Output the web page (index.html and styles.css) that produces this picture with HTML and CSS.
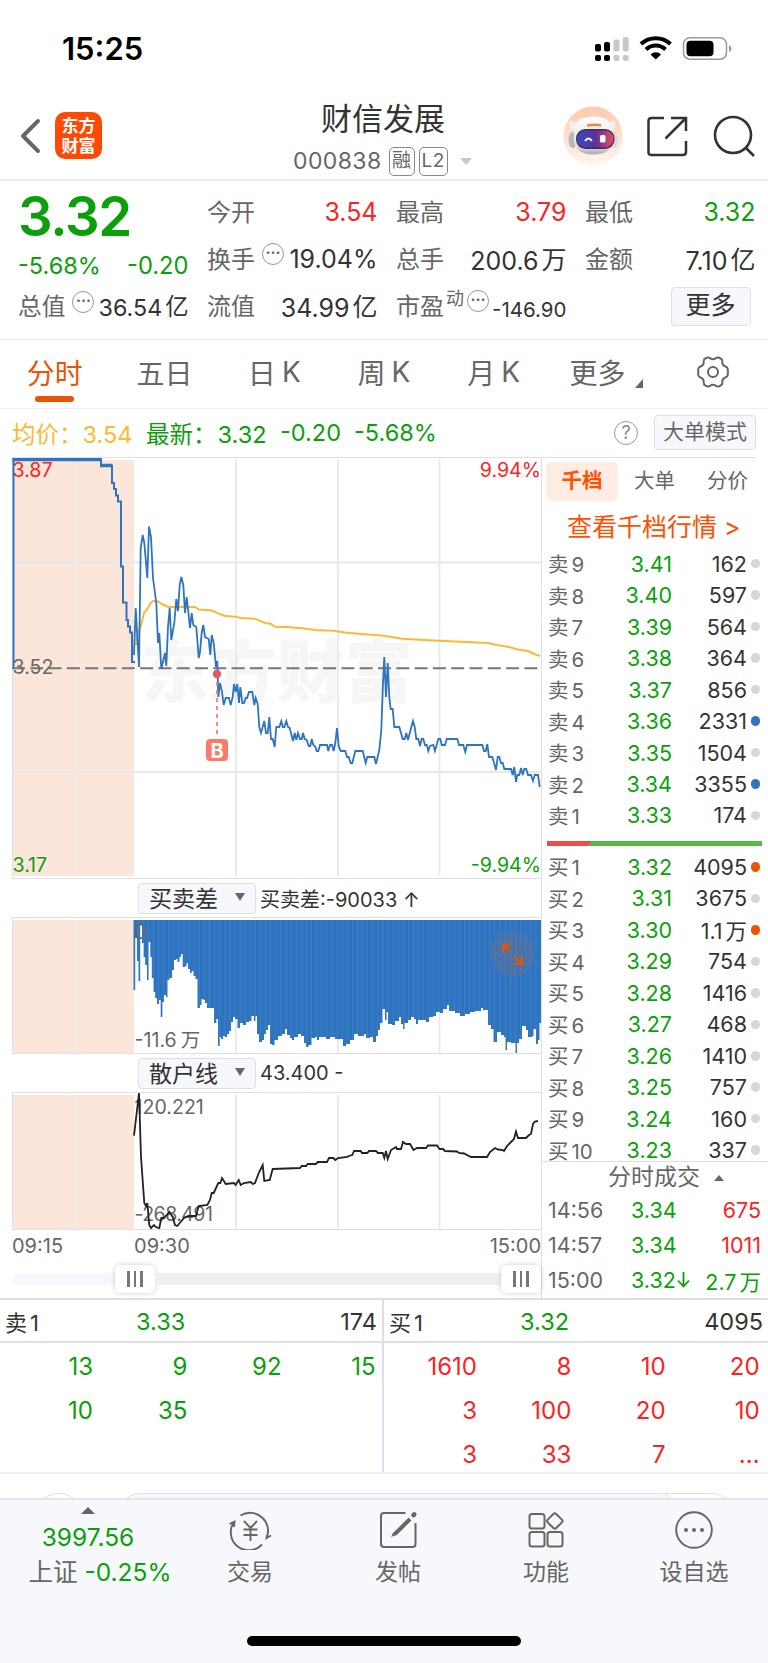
FILE: index.html
```html
<!DOCTYPE html>
<html lang="zh-CN">
<head>
  <meta charset="UTF-8">
  <title>财信发展 000838</title>
  <link rel="stylesheet" href="styles.css">
</head>
<body>

  <!-- Barra de estado -->
  <div class="status">
    <span class="clock">15:25</span>
    <svg class="status-icons" width="140" height="26" viewBox="0 0 140 26">
      <g fill="#000"><rect x="0" y="8" width="6" height="7.500" rx="2"/><rect x="9" y="6" width="6" height="9.500" rx="2"/><rect x="0" y="19" width="6" height="6" rx="2"/><rect x="9" y="19" width="6" height="6" rx="2"/></g>
      <g fill="#c8c8c8"><rect x="18.500" y="3.500" width="6" height="12" rx="2"/><rect x="27.700" y="1" width="6" height="14.500" rx="2"/><rect x="18.500" y="19" width="6" height="6" rx="2"/><rect x="27.700" y="19" width="6" height="6" rx="2"/></g>
      <path d="M46 8a21.500 21.500 0 0 1 29.500 0M51 13.500a14 14 0 0 1 19.500 0" fill="none" stroke="#000" stroke-width="4"/>
      <path d="M55.500 18.500a7.500 7.500 0 0 1 10.500 0l-5.200 5z"/>
      <rect x="88.500" y="1.800" width="43" height="21.500" rx="6.500" fill="none" stroke="#9b9b9b" stroke-width="1.500"/>
      <rect x="91.500" y="4.800" width="27" height="15.500" rx="4"/>
      <path d="M134 9q2.500 1 2.500 3.500t-2.500 3.500z" fill="#9b9b9b"/>
    </svg>
  </div>

  <!-- Cabecera -->
  <header class="header">
    <svg class="back" width="22" height="36" viewBox="0 0 22 36"><path d="M18 3L3 18l15 15" fill="none" stroke="#666" stroke-width="4" stroke-linecap="round" stroke-linejoin="round"/></svg>
    <div class="logo">东方<br>财富</div>
    <div class="title">
      <h1>财信发展</h1>
      <p>000838 <span class="tag">融</span><span class="tag">L2</span><i class="caret"></i></p>
    </div>
    <div class="actions">
      <svg width="60" height="60" viewBox="0 0 60 60">
        <defs>
          <linearGradient id="halo" x1="0" y1="0" x2="0" y2="1"><stop offset="0" stop-color="#ffc9ad"/><stop offset="1" stop-color="#fff6f1"/></linearGradient>
          <linearGradient id="visor"><stop offset="0" stop-color="#3a4bc0"/><stop offset=".5" stop-color="#5c2f9c"/><stop offset="1" stop-color="#f04a62"/></linearGradient>
          <linearGradient id="head" x1="0" y1="0" x2="0" y2="1"><stop offset="0" stop-color="#fff"/><stop offset=".8" stop-color="#e4dfe2"/><stop offset="1" stop-color="#a9a6b2"/></linearGradient>
        </defs>
        <circle cx="30" cy="30" r="29.500" fill="url(#halo)"/>
        <ellipse cx="10" cy="34" rx="4.500" ry="8" fill="#b9b6bd"/><ellipse cx="51" cy="34" rx="4" ry="8" fill="#dcd5d9"/>
        <path d="M7 14q-2 8 4 11l7-9q-8 1-11-2zM52 14q2 8-4 11l-7-9q8 1 11-2z" fill="#f3eff0"/>
        <path d="M11 30q0-16 9-18 10-3 20 0 9 2 10 18 2 18-19 18.500-22 0-20-18.500z" fill="url(#head)"/>
        <rect x="13" y="23" width="38.500" height="20" rx="9.500" fill="#3b3150"/>
        <rect x="14" y="24.500" width="36.500" height="17" rx="8.500" fill="url(#visor)"/>
        <path d="M24 19.500q7-1.500 14-.3" stroke="#ee8a3a" stroke-width="2.500" fill="none"/>
        <path d="M22 35q3.500-5 7 0" stroke="#fff" stroke-width="1.800" fill="none"/><rect x="37" y="29" width="5.500" height="7.500" rx="1.500" fill="#fff"/>
      </svg>
      <svg width="42" height="42" viewBox="0 0 42 42" fill="none" stroke="#333" stroke-width="2.500"><path d="M18 3H5.500Q2.500 3 2.500 6v31.500q0 2.500 3 2.500H37q3 0 3-3V26M25 3h15v13M39 4L19.500 23.500"/></svg>
      <svg width="42" height="42" viewBox="0 0 42 42" fill="none" stroke="#333" stroke-width="2.600"><circle cx="20" cy="20" r="18"/><path d="M32.500 32.500L41 41"/></svg>
    </div>
  </header>

  <!-- Cotización -->
  <section class="quote">
    <div class="col">
      <div class="price green">3.32</div>
      <div class="pair small green"><span>-5.68%</span><span>-0.20</span></div>
      <div class="pair small"><label>总值<b class="dots">···</b></label><span>36.54<u>亿</u></span></div>
    </div>
    <div class="col">
      <div class="pair"><label>今开</label><span class="red">3.54</span></div>
      <div class="pair"><label>换手<b class="dots">···</b></label><span>19.04%</span></div>
      <div class="pair"><label>流值</label><span>34.99<u>亿</u></span></div>
    </div>
    <div class="col">
      <div class="pair"><label>最高</label><span class="red">3.79</span></div>
      <div class="pair"><label>总手</label><span>200.6<u>万</u></span></div>
      <div class="pair"><label>市盈<sup>动</sup><b class="dots near">···</b></label><span class="tiny">-146.90</span></div>
    </div>
    <div class="col">
      <div class="pair"><label>最低</label><span class="green">3.32</span></div>
      <div class="pair"><label>金额</label><span>7.10<u>亿</u></span></div>
      <div class="pair end"><span class="more">更多</span></div>
    </div>
  </section>

  <nav class="tabs">
    <span class="active">分时</span><span>五日</span><span>日<em>K</em></span><span>周<em>K</em></span><span>月<em>K</em></span><span class="last">更多<i class="corner"></i></span>
    <span><svg width="34" height="34" viewBox="0 0 34 34" fill="none" stroke="#666" stroke-width="2"><path d="M10.500 2.800Q13 2 14.500 3.400 17 5.200 19.500 3.400 21 2 23.500 2.800L25.600 4.200Q26.500 5.300 26.300 7.500 26.400 10.400 29 11.300 31.600 12.200 31.800 14.200V19.800Q31.600 21.800 29 22.700 26.400 23.600 26.300 26.500 26.500 28.700 25.600 29.800L23.500 31.200Q21 32 19.500 30.600 17 28.800 14.500 30.600 13 32 10.500 31.200L8.400 29.800Q7.500 28.700 7.700 26.500 7.600 23.600 5 22.700 2.400 21.800 2.200 19.800V14.200Q2.400 12.200 5 11.300 7.600 10.400 7.700 7.500 7.500 5.300 8.400 4.200Z" stroke-linejoin="round"/><circle cx="17" cy="17" r="5"/></svg></span>
  </nav>

  <div class="latest">
    <span class="avg">均价：3.54</span>
    <span class="green now">最新：<span>3.32</span></span><span class="green now2">-0.20</span><span class="green now3">-5.68%</span>
    <span class="help">?</span>
    <span class="mode">大单模式</span>
  </div>

  <main class="market">
    <div class="charts">
      <svg width="530" height="422" viewBox="12 457 530 422">
        <rect x="12" y="460" width="122" height="416" fill="#fce6da"/>
        <text x="141" y="697" class="watermark">东方财富</text>
        <path class="grid" d="M73 459V876M236 459V876M338 459V876M439.500 459V876M12 562.500H541M12 772H541"/>
        <path d="M12.500 457V878M12 878.500H541" fill="none" stroke="#dcdfe6" stroke-width="1.200"/>
        <path d="M12 668.300H541" stroke="#777" stroke-width="2" stroke-dasharray="13 5.300"/>
        <polyline id="avgLine" fill="none" stroke="#fdb933" stroke-width="2"/>
        <polyline id="preLine" fill="none" stroke="#2f74c0" stroke-width="2"/>
        <path d="M12.500 459.500H101.500M100 465.500H112" stroke="#2f74c0" stroke-width="3.500"/>
        <polyline id="priceLine" fill="none" stroke="#2f74c0" stroke-width="1.800"/>
        <path d="M217 674V738" stroke="#fb7b6b" stroke-width="1.800" stroke-dasharray="4 4"/>
        <circle cx="217" cy="674" r="4.200" fill="#e4595a"/>
        <rect x="206" y="739" width="22" height="22" rx="4" fill="#fb7b6b"/>
        <text x="217" y="757.500" class="buy">B</text>
        <text x="12.500" y="477" class="axis red">3.87</text>
        <text x="541" y="477" class="axis red" text-anchor="end">9.94%</text>
        <text x="12.500" y="674" class="axis">3.52</text>
        <text x="12.500" y="871.500" class="axis green">3.17</text>
        <text x="541" y="871.500" class="axis green" text-anchor="end">-9.94%</text>
      </svg>

      <div class="indicator"><span class="select">买卖差<i></i></span><span>买卖差:-90033 ↑</span></div>

      <svg width="530" height="137" viewBox="12 917 530 137">
        <defs><pattern id="stripes" width="5.100" height="10" patternUnits="userSpaceOnUse"><rect width="5.100" height="10" fill="#2f74c0"/><rect width=".8" height="10" fill="#4080c5"/></pattern></defs>
        <rect x="12" y="920" width="122" height="133" fill="#fce6da"/>
        <path class="grid" d="M73 920V1053M236 920V1053M338 920V1053M439.500 920V1053"/>
        <path d="M12.500 917V1054M12 917.500H541M12 1053.500H541" fill="none" stroke="#dcdfe6"/>
        <path id="diffArea" fill="url(#stripes)"/>
        <text x="134.500" y="939" class="axis">0</text>
        <text x="134.500" y="1047" class="axis">-11.6<tspan dx="4">万</tspan></text>
        <circle cx="512.500" cy="954" r="22.500" fill="#747487" fill-opacity=".35"/>
        <path d="M503 953V944.500H511.500M503 944.500L511 952.500M514 956L522 964M522 955.500V964H513.500" fill="none" stroke="#ea5504" stroke-width="2.200"/>
      </svg>

      <div class="indicator"><span class="select">散户线<i></i></span><span>43.400 -</span></div>

      <svg width="530" height="138" viewBox="12 1092 530 138">
        <rect x="12" y="1095" width="122" height="134" fill="#fce6da"/>
        <path class="grid" d="M73 1095V1229M236 1095V1229M338 1095V1229M439.500 1095V1229"/>
        <path d="M12.500 1092V1230M12 1092.500H541M12 1229.500H541" fill="none" stroke="#dcdfe6"/>
        <text x="134.500" y="1114" class="axis">120.221</text>
        <text x="134.500" y="1221" class="axis tight">-268.491</text>
        <polyline id="retailLine" fill="none" stroke="#222" stroke-width="1.800"/>
      </svg>

      <div class="times"><span>09:15</span><span class="open">09:30</span><span class="close">15:00</span></div>
      <div class="slider"><div class="off"></div><div class="handle"><i></i><i></i><i></i></div><div class="on"></div><div class="handle"><i></i><i></i><i></i></div></div>
    </div>

    <aside class="book">
      <div class="book-tabs"><span class="active">千档</span><span>大单</span><span>分价</span></div>
      <div class="link">查看千档行情 &gt;</div>
      <div id="asks" class="rows"></div>
      <div class="ratio"></div>
      <div id="bids" class="rows bids"></div>
      <div class="deals">
        <div class="deals-title">分时成交<i></i></div>
        <div class="deal"><span>14:56</span><span class="green">3.34</span><span class="red">675</span></div>
        <div class="deal"><span>14:57</span><span class="green">3.34</span><span class="red">1011</span></div>
        <div class="deal"><span>15:00</span><span class="green">3.32<svg width="15" height="17" viewBox="0 0 15 17"><path d="M7.500 1V15M2 9.500l5.500 6 5.500-6" fill="none" stroke="#0aa00a" stroke-width="1.800"/></svg></span><span class="green">2.7<u>万</u></span></div>
      </div>
    </aside>
  </main>

  <!-- Detalle de órdenes -->
  <section class="orders">
    <div class="side">
      <div class="side-head"><span>卖<u>1</u></span><span class="green">3.33</span><span>174</span></div>
      <div class="nums green"><span>13</span><span>9</span><span>92</span><span>15</span><span>10</span><span>35</span></div>
    </div>
    <div class="side">
      <div class="side-head"><span>买<u>1</u></span><span class="green">3.32</span><span>4095</span></div>
      <div class="nums red"><span>1610</span><span>8</span><span>10</span><span>20</span><span>3</span><span>100</span><span>20</span><span>10</span><span>3</span><span>33</span><span>7</span><span>...</span></div>
    </div>
  </section>

  <div class="peek"><div class="peek-circle"></div><div class="peek-box"><div></div></div></div>

  <footer class="bottom">
    <div class="items">
      <div class="index"><i></i><span class="green">3997.56</span><span>上证 <b class="green">-0.25%</b></span></div>
      <div class="item">
        <svg width="44" height="40" viewBox="0 0 44 40" fill="none" stroke="#666" stroke-width="1.900"><path d="M12.500 5.500A18 18 0 0 1 38.500 28M34 34.500A18 18 0 0 1 6 12M1.500 14L6.500 11.500 6 17M43 25.500L38.500 28 40 22.500M16 11l6.500 7 6.500-7M22.500 18v13M15.500 19.500h14M15.500 25h14"/></svg>
        <span>交易</span>
      </div>
      <div class="item">
        <svg width="40" height="40" viewBox="0 0 40 40" fill="none" stroke="#666" stroke-width="2"><path d="M27.500 3H6Q3 3 3 6v28q0 3 3 3h28.500q3 0 3-3V13"/><path d="M32 9L17 24" stroke-width="4"/><path d="M35.500 5.200l.8-.8" stroke-width="4.500" stroke-linecap="round"/><path d="M13 27l2.500-5 3 3z" fill="#666" stroke="none"/></svg>
        <span>发帖</span>
      </div>
      <div class="item">
        <svg width="40" height="40" viewBox="0 0 40 40" fill="none" stroke="#666" stroke-width="2"><rect x="3.500" y="4" width="15" height="14.500" rx="2.500"/><rect x="3.500" y="22" width="15" height="14.500" rx="2.500"/><rect x="21.500" y="22" width="15" height="14.500" rx="2.500"/><rect x="22.800" y="5" width="12" height="12" rx="2" transform="rotate(45 28.800 11)"/></svg>
        <span>功能</span>
      </div>
      <div class="item">
        <svg width="40" height="40" viewBox="0 0 40 40"><circle cx="20" cy="20" r="17.800" fill="none" stroke="#666" stroke-width="1.900"/><g fill="#666"><circle cx="12" cy="20" r="2"/><circle cx="20" cy="20" r="2"/><circle cx="28" cy="20" r="2"/></g></svg>
        <span>设自选</span>
      </div>
    </div>
    <div class="home"></div>
  </footer>

  <script>
    // Series de los gráficos
    const avg = "136,645 138,632 140.700,627 144,613 147.300,609 150.700,603 153.300,600.700 158,601.500 161.700,604 168.300,607 195,607 199,609.500 211.700,610.500 216.700,612.700 224,615.700 236.700,617 241,618 255,618.700 265,623 270.700,623.700 274.700,626.700 286.700,627 301.700,628.300 315,630 333.300,630.700 346.700,632.700 384,635.700 402.300,638.700 434,640.500 488,643 497,645 509,647 518,649.500 528,651 534,654 540,656";
    const pre = "13.500,668 13.500,459 101,459 101,465.500 112,465.500 112,483 114,483 114,489 116,489 116,495.500 118,495.500 118,501.500 121,501.500 121,566.500 123,566.500 123,602.500 126.500,602.500 126.500,620 128,620 128,626.500 130,626.500 130,632.500 132,632.500 132,662 135,662";
    const price = "134,655 135.700,608 139,667 140.700,548 142.700,535 144.300,543 147.300,578 149,526.500 151,537 153,578 156.300,603 158,643 159.300,633 161.300,669 165,653 166.300,666 168,627 169.700,608 171.300,640 174.300,623 176.300,599 178,611 179.700,585 181.300,577 183.300,585 185,613 186.700,597 190,628 191.700,613 193.300,625 196.300,627 198.700,658 200,652 201.700,633 203.300,625 205,637 208.700,639 210.300,655 211.700,635 213.700,643 216,667 217.300,661 218.300,697 220,683 222,692 223.700,705 225.700,698 229,698 230.700,705 232.700,697 234,684 235.700,692 237.300,684 239,703 240.300,687 242.300,703 244,703 245.700,698 247,698 249,692 252.300,692 254.300,705 255.700,698 257.700,704 259.300,727 261,733 264.300,721 266,733 267.700,733 269.300,717 271,739 272.700,739 274.700,747 276.300,727 279.300,727 281.300,721 282.700,727 284.300,727 286.300,721 288,727 289.700,728 293,741 294.700,733 296.300,740 298,733 300,739 301.700,739 303,733 304.700,739 306.700,740 308.700,746 310.300,746 311.700,739 313.300,745 315,746 316.700,751 318.300,751 320,745 327,745 328.300,751 330,745 332,745 333.700,751 335.300,743 337,728 338.700,746 340.700,751 345.300,751 347,757 348.700,757 350.700,763 352.300,763 355.300,751 362.700,751 365.700,763 367.300,757 374.300,757 376,764 379.300,750 381.300,730 383,683 384.300,657 386,697 387.700,663 389.300,697 390.700,709 392.700,709 394.300,727 399.300,727 402.700,739 404.700,739 406.300,733 408,740 411.300,727 413,721 414.700,727 416.300,739 418.300,739 420,746 421.700,739 423.300,739 425,745 426.700,745 428.300,751 430,746 433.300,745 435,751 438.300,739 440.300,739 441.700,745 445,745 446.700,739 457.300,739 459,745 463.300,745 465.300,752 467,745 482.300,745 484,751 485.700,751 487.300,744 489,757 492.300,757 496,770 497.700,757 499.300,757 501,763 502.700,763 504.300,769 511,769 512.700,775 514.300,767 516,782 517.300,775 519.300,775 521,768 522.700,775 524.300,769 526.300,769 528,775 531,775 533,781 534.700,775 538,775 539.700,787";
    const retail = "134,1135.700 139,1093 141,1157 144.300,1203 146,1206 147.300,1203 149.300,1225 151,1228 154,1225 155.700,1227 159.300,1228 161.300,1218 164,1218 169.300,1212 172.700,1217 175,1225 177.300,1226 184,1218 188.300,1216 196,1216 198.700,1206 207.300,1205 210,1200 211.700,1193 213.700,1193 218.300,1183 220.300,1183 222,1178 225.700,1184 234,1183 235.700,1185 238.700,1180 240.700,1185 244,1183 250.700,1182 252.700,1184 255,1183 258.700,1173 262.700,1165 264.300,1181 269.700,1180 272.700,1169 300,1168 301.700,1166 306,1166 307.700,1164 316,1164 317.700,1162 327,1162 329,1158 333.300,1158 335.300,1160 338,1158 347.300,1157 348.700,1156 352.300,1155 354,1151 360.700,1151 362,1153 367.300,1153 369,1151 376,1151 378,1153 382.700,1153 384.300,1158 386,1151 387.700,1159 391,1150 396,1147 397,1149 401,1149 403,1142 406,1144 410,1144 413.500,1150 417,1148 426,1148 428,1145.500 437,1145.500 439.500,1149 443,1149 445,1151 457,1151.500 459,1153 464,1153.500 471,1157 487,1157 490,1152 495,1148 498,1149.500 503,1150 504,1151 507,1146 511,1142 514,1139 516,1131.500 518,1138 526,1138 529,1135 531,1134 533,1124 535,1121.500 538,1121";
    const diff = "133.500,990 135.200,938 137,961 138.500,981 140.200,925 142,943 143.600,957 145.200,965 147,980 148.600,942 150.300,957 151.800,978 153.500,992 155.200,998 157,1004 159,1000 160.700,1017 162.400,1002 164,995 166,997 167.500,980 169.500,978 172,970 174,960 176,959 177.500,962 179.500,957 181,954 182.700,967 185,966 186.500,963 188,969 190,973 191.700,971 193.500,976 195.500,979 197.500,1008 200,1005 201.500,999 203.500,1000 205,1003 207,1008 213,1008 214,1023 216.300,1019 218,1046 219.700,1037 221,1039 223,1036 225,1037 227,1034 229,1031 231,1022 233,1017 235,1019 237.500,1028 240,1023 243,1025 246,1022 249,1021 251.500,1016 254,1021 255.500,1016 257,1034 259,1042 262,1040 264,1034 266,1030 268,1025 270,1044 272,1045 274.500,1040 278,1036 282,1034 285,1029 287,1035 290,1038 292,1040 294,1037 298,1034 301,1036 304,1043 306,1047 308.500,1045 311.500,1038 315,1037 317,1040 319,1037 326,1039 330,1037 335,1039 340,1039 343,1046 346,1044 350,1040 354,1034 358,1036 364,1034 366,1038 370,1037 373,1042 376,1036 378,1030 380,1023 382.500,1009 385,1020 386.500,1012 388,1024 392,1025 395,1021 399,1017 401,1024 403,1029 404.500,1023 408,1020 411,1017 414,1019 416,1024 418,1020 426,1022 429,1017 433,1016 436,1012 440,1013 443,1009 447,1005 449,1011 455,1013 460,1016 465,1014 470,1012 475,1011 481,1008 483,1010 488,1025 491,1029 493.500,1042 497,1032 501,1035 504,1037 505.500,1050 507,1042 511,1043 515.500,1053 517,1043 519,1039 522,1026 526,1030 528,1037 532,1036 533.500,1029 536,1044 538,1040 539.500,1023";

    document.getElementById("avgLine").setAttribute("points", avg);
    document.getElementById("preLine").setAttribute("points", pre);
    document.getElementById("priceLine").setAttribute("points", price);
    document.getElementById("retailLine").setAttribute("points", retail);

    // Área escalonada
    let d = "M133.500 920";
    diff.split(" ").forEach(p => {
      const [x, y] = p.split(",");
      d += `H${x}V${y}`;
    });
    document.getElementById("diffArea").setAttribute("d", d + "H541V920Z");

    const asks = [[9, "3.41", "162"], [8, "3.40", "597"], [7, "3.39", "564"], [6, "3.38", "364"], [5, "3.37", "856"], [4, "3.36", "2331", "blue"], [3, "3.35", "1504"], [2, "3.34", "3355", "blue"], [1, "3.33", "174"]];
    const bids = [[1, "3.32", "4095", "orange"], [2, "3.31", "3675"], [3, "3.30", "1.1<u>万</u>", "orange"], [4, "3.29", "754"], [5, "3.28", "1416"], [6, "3.27", "468"], [7, "3.26", "1410"], [8, "3.25", "757"], [9, "3.24", "160"], [10, "3.23", "337"]];

    function pintarFilas(id, nombre, filas) {
      document.getElementById(id).innerHTML = filas.map(f =>
        `<div class="row"><span>${nombre}<u>${f[0]}</u></span><span class="green">${f[1]}</span><span>${f[2]}</span><i class="${f[3] || ""}"></i></div>`
      ).join("");
    }

    pintarFilas("asks", "卖", asks);
    pintarFilas("bids", "买", bids);
  </script>

</body>
</html>
```
FILE: styles.css
```css
* {
  box-sizing: border-box;
}
body {
  margin: 0;
  width: 768px;
  height: 1663px;
  display: flex;
  flex-direction: column;
  overflow: hidden;
  background: #fff;
  color: #333;
  font-family: Inter, "Noto Sans CJK SC", sans-serif;
  font-size: 24px;
}
h1, p {
  margin: 0;
  font-weight: normal;
}
u {
  text-decoration: none;
  margin-left: 3px;
}
em {
  font-style: normal;
  margin-left: 6px;
}
.green {
  color: #0aa00a;
  fill: #0aa00a;
}
.red {
  color: #fb2323;
  fill: #fb2323;
}

/* barra de estado */
.status {
  height: 90px;
  padding: 31px 33px 0 62px;
  display: flex;
  justify-content: space-between;
}
.clock {
  font-size: 31px;
  font-weight: 600;
  line-height: 36px;
  color: #000;
}
.status-icons {
  margin: 5px 0 0;
}

/* cabecera */
.header {
  height: 91px;
  border-bottom: 2px solid #ebebeb;
  display: grid;
  grid-template-columns: 55px 47px 1fr 205px;
}
.back {
  margin: 28px 0 0 20px;
}
.logo {
  width: 47px;
  height: 47px;
  margin-top: 22px;
  padding-top: 3px;
  border-radius: 10px;
  background: #ff4a05;
  color: #fff;
  font-family: "Noto Sans CJK SC", sans-serif;
  font-weight: 700;
  font-size: 17px;
  line-height: 20px;
  text-align: center;
}
.title {
  padding-top: 8px;
  padding-left: 191px;
}
.title h1 {
  width: 130px;
  margin-left: 28px;
  font-size: 31px;
  line-height: 42px;
  white-space: nowrap;
}
.title p {
  display: flex;
  align-items: center;
  height: 32px;
  margin-top: 5px;
  font-size: 23px;
  letter-spacing: .4px;
  white-space: nowrap;
  color: #666;
}
.tag {
  height: 29px;
  min-width: 26px;
  margin-left: 4px;
  padding: 0 2px;
  border: 1px solid #888;
  border-radius: 5px;
  font-size: 19px;
  line-height: 26px;
  text-align: center;
}
.tag:first-of-type {
  margin-left: 7px;
}
.caret {
  margin-left: 12px;
  border: 6.5px solid transparent;
  border-top: 7px solid #c8c8c8;
  border-bottom: 0;
}
.actions {
  display: flex;
  align-items: center;
  gap: 25px;
  height: 91px;
}
.actions svg:first-child {
  margin-right: -2px;
}

/* cotización */
.quote {
  height: 159px;
  border-bottom: 1px solid #eee;
  display: grid;
  grid-template-columns: repeat(4, 169.500px);
  column-gap: 19.500px;
  padding: 7px 0 0 19px;
}
.pair {
  height: 47.300px;
  display: flex;
  justify-content: space-between;
  align-items: center;
  font-size: 25px;
  white-space: nowrap;
}
.pair label {
  font-size: 24px;
  color: #666;
  display: flex;
  margin-left: -1px;
  padding-bottom: 3px;
}
.pair span u {
  position: relative;
  top: -1px;
}
.pair.small, .pair.small label {
  font-size: 23.700px;
}
.pair.small label + span {
  font-size: 23.300px;
}
.price {
  height: 52px;
  font-size: 54.500px;
  line-height: 57px;
  font-weight: 600;
  letter-spacing: -1.300px;
  margin-left: -1px;
}
.price + .pair {
  height: 42.500px;
  padding-top: 8px;
}
.price + .pair span:first-child {
  font-size: 23.500px;
  margin-left: -1px;
}
.pair sup {
  font-size: 18px;
  line-height: 18px;
  margin: 3px 0 0 2px;
}
.tiny {
  font-size: 20.500px;
  padding-top: 6px;
}
.dots {
  width: 22px;
  height: 22px;
  margin: 3px 0 0 7px;
  border: 1.500px solid #999;
  border-radius: 50%;
  font-size: 15px;
  line-height: 18px;
  text-align: center;
}
.dots.near {
  margin-left: 3px;
}
.pair.end {
  justify-content: flex-end;
}
.more {
  width: 80px;
  height: 39px;
  margin: 1px 5px 0 0;
  background: #f7f8fb;
  border: 1px solid #dcdfe6;
  border-radius: 4px;
  font-size: 25px;
  line-height: 35px;
  text-align: center;
}

/* pestañas */
.tabs {
  height: 69px;
  border-bottom: 1px solid #eee;
  display: grid;
  grid-template-columns: repeat(7, 1fr);
  font-size: 28px;
  color: #666;
}
.tabs span {
  display: flex;
  justify-content: center;
  align-items: center;
  padding-bottom: 5px;
  position: relative;
}
.tabs .last {
  padding-left: 6px;
}
.tabs .active {
  color: #ea5504;
}
.tabs .active::after {
  content: "";
  position: absolute;
  bottom: 6px;
  width: 39px;
  height: 6px;
  border-radius: 3px;
  background: #ea5504;
}
.corner {
  margin: 23px 0 0 10px;
  border-left: 8px solid transparent;
  border-bottom: 9px solid #666;
}

/* resumen */
.latest {
  height: 48px;
  padding: 0 12px 1px 12px;
  display: flex;
  align-items: center;
  font-size: 23.500px;
  white-space: nowrap;
}
.avg {
  width: 134px;
  color: #fdb933;
}
.now {
  width: 134px;
}
.now span {
  margin-left: 1px;
}
.now2 {
  width: 74px;
}
.help {
  width: 24px;
  height: 24px;
  margin-left: auto;
  border: 1.500px solid #999;
  border-radius: 50%;
  font-size: 18px;
  line-height: 21px;
  color: #888;
  text-align: center;
}
.mode {
  width: 102px;
  height: 35px;
  margin-left: 16px;
  background: #f7f8fb;
  border: 1px solid #dcdfe6;
  border-radius: 4px;
  font-size: 21px;
  line-height: 31px;
  color: #666;
  text-align: center;
}

/* gráficos */
.market {
  height: 843px;
  display: flex;
  border-bottom: 2px solid #dcdfe6;
  position: relative;
}
.market::before {
  content: "";
  position: absolute;
  left: 12px;
  right: 12px;
  border-top: 1px solid #dcdfe6;
}
.charts {
  width: 542px;
  padding-left: 12px;
  border-right: 1px solid #dcdfe6;
}
.charts > svg {
  display: block;
}
.grid {
  stroke: #e6e8ef;
  stroke-width: 1.800;
}
.axis {
  font-size: 19.600px;
}
.tight {
  letter-spacing: -.6px;
}
.axis:not(.red):not(.green) {
  fill: #666;
}
.watermark {
  font-size: 68px;
  font-weight: 900;
  fill: #f6f6f6;
}
.buy {
  font-size: 20px;
  font-weight: 700;
  fill: #fff;
  text-anchor: middle;
}
.indicator {
  height: 38px;
  padding-left: 126px;
  display: flex;
  align-items: center;
  gap: 4px;
  font-size: 20px;
}
.select {
  width: 118px;
  height: 31px;
  padding: 0 10px 2px;
  display: flex;
  align-items: center;
  justify-content: space-between;
  background: #f7f8fb;
  border: 1px solid #dcdfe6;
  border-radius: 4px;
  font-size: 23px;
}
.select i {
  border: 5px solid transparent;
  border-top: 8px solid #666;
  border-bottom: 0;
}
.times {
  height: 32px;
  display: flex;
  align-items: center;
  font-size: 20px;
  color: #666;
}
.open {
  margin-left: 71px;
}
.close {
  margin-left: auto;
}
.slider {
  height: 33px;
  display: flex;
  align-items: center;
}
.off {
  width: 103px;
  height: 12px;
  border-radius: 6px 0 0 6px;
  background: #f7f8fb;
}
.on {
  flex: 1;
  height: 12px;
  background: #f0f0f3;
}
.handle {
  width: 40px;
  height: 28px;
  display: flex;
  align-items: center;
  justify-content: center;
  gap: 4px;
  border-radius: 5px;
  background: #fff;
  box-shadow: 0 0 5px rgba(0, 0, 0, .2);
}
.handle i {
  width: 2.500px;
  height: 16px;
  background: #777;
}

/* libro de órdenes */
.book {
  width: 226px;
  font-size: 21.500px;
}
.book-tabs {
  height: 39px;
  margin: 5px 0 0 4px;
  display: grid;
  grid-template-columns: 72px 73px 73px;
  line-height: 38px;
  text-align: center;
  font-size: 20.500px;
  color: #666;
}
.book-tabs .active {
  border-radius: 5px;
  background: #ffede4;
  color: #ff5000;
  font-weight: bold;
}
.link {
  height: 47px;
  padding-left: 25px;
  font-size: 25px;
  line-height: 52px;
  color: #ff5000;
  white-space: nowrap;
}
.row {
  height: 31.480px;
  padding: 0 8px 0 6px;
  display: grid;
  grid-template-columns: 51px 73px 75px 13px;
  align-items: center;
  text-align: right;
  white-space: nowrap;
}
.row span:first-child {
  text-align: left;
  color: #666;
  font-size: 20.500px;
  padding-bottom: 1px;
}
.row i {
  width: 9.500px;
  height: 9.500px;
  border-radius: 50%;
  background: #d4d7de;
  justify-self: end;
}
.row .blue {
  background: #2f74c0;
}
.row .orange {
  background: #ea5504;
}
.ratio {
  width: 215px;
  height: 5px;
  margin: 10px 0 5px 5px;
  background: linear-gradient(125deg, #ef4c4c 36px, #58b947 37px);
}
.bids {
  height: 310px;
  overflow: hidden;
}
.deals {
  border-top: 1px solid #dcdfe6;
}
.deals-title {
  height: 30px;
  padding-left: 66px;
  font-size: 23px;
  line-height: 31px;
  color: #666;
}
.deals-title i {
  display: inline-block;
  margin: 0 0 4px 14px;
  border: 5px solid transparent;
  border-top: 0;
  border-bottom: 6px solid #666;
}
.deal {
  height: 35.300px;
  padding: 0 7px 0 6px;
  display: grid;
  grid-template-columns: 83px 60px 1fr;
  align-items: center;
  white-space: nowrap;
}
.deal span:first-child {
  color: #666;
}
.deal span:last-child {
  text-align: right;
}

/* detalle */
.orders {
  height: 174px;
  display: grid;
  grid-template-columns: 384px 384px;
  grid-template-rows: 172px;
  border-bottom: 2px solid #eee;
}
.side:first-child {
  border-right: 2px solid #dcdfe6;
}
.side-head {
  height: 43px;
  padding: 2px 5px 0;
  border-bottom: 2px solid #dcdfe6;
  display: grid;
  grid-template-columns: 131px 100px 1fr;
  align-items: center;
  font-size: 23.500px;
}
.side-head span:first-child {
  font-size: 22px;
  padding-bottom: 2px;
}
.side-head span:last-child {
  text-align: right;
}
.nums {
  padding-top: 2px;
  display: grid;
  grid-template-columns: 93px 94.300px 94.300px 94px;
  grid-auto-rows: 43.800px;
  align-items: center;
  text-align: right;
}
.peek {
  height: 24px;
  padding: 19px 31px 0 32px;
  display: flex;
  gap: 28px;
  overflow: hidden;
}
.peek-circle {
  width: 54px;
  height: 54px;
  flex: none;
  border: 1px solid #dcdfe6;
  border-radius: 50%;
}
.peek-box {
  flex: 1;
  height: 54px;
  border: 1px solid #dcdfe6;
  border-radius: 27px;
  background: #f7f8fb;
  overflow: hidden;
}
.peek-box div {
  width: 69px;
  height: 54px;
  margin-left: auto;
  border-left: 1px solid #dcdfe6;
  background: #fff;
}

/* menú inferior */
.bottom {
  flex: 1;
  background: #f7f8fb;
  border-top: 2px solid #e3e5ea;
}
.items {
  height: 136px;
  display: grid;
  grid-template-columns: 176px 148px 148px 148px 148px;
}
.item, .index {
  display: flex;
  flex-direction: column;
  align-items: center;
  font-size: 23px;
  color: #666;
}
.item svg {
  margin-top: 10px;
  height: 40px;
}
.item span {
  line-height: 34px;
  margin-top: 5px;
}
.index {
  font-size: 24.500px;
  white-space: nowrap;
}
.index i {
  margin-top: 7px;
  border: 7px solid transparent;
  border-top: 0;
  border-bottom: 7px solid #666;
}
.index span {
  line-height: 36px;
  margin-top: 5px;
}
.index span:last-child {
  margin: -1px 0 0 24px;
}
.index b {
  font-weight: normal;
}
.home {
  width: 274px;
  height: 10px;
  margin: 0 auto;
  border-radius: 5px;
  background: #000;
}
```
